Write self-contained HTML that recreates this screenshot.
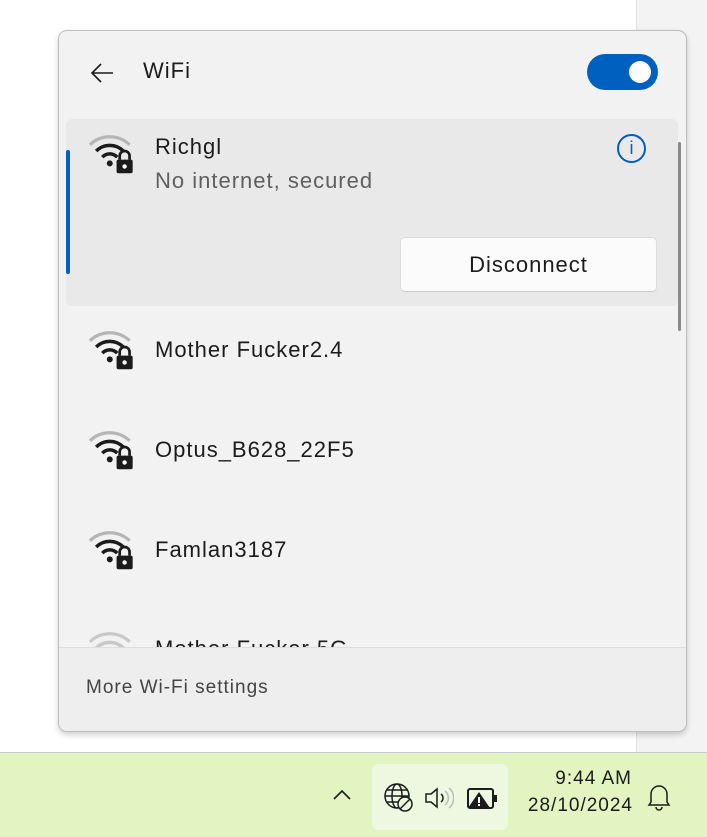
<!DOCTYPE html>
<html><head><style>
*{margin:0;padding:0;box-sizing:border-box}
body{width:707px;height:837px;overflow:hidden;background:#fff;font-family:"Segoe UI","Liberation Sans",sans-serif;position:relative}
.strip{position:absolute;left:636px;top:0;width:71px;height:752px;background:#f3f3f3;border-left:1px solid #e2e2e2}
.panel{position:absolute;left:58px;top:30px;width:629px;height:702px;background:#f2f2f2;border:1px solid #bdbdbd;border-radius:9px;overflow:hidden;box-shadow:0 3px 6px rgba(0,0,0,.18)}
.t{position:absolute;white-space:nowrap;color:#1b1b1b;letter-spacing:1px}
.big{font-size:22px}
.sel{position:absolute;left:7px;top:88px;width:612px;height:187px;background:#e9e9e9;border-radius:6px}
.bar{position:absolute;left:7px;top:119px;width:4px;height:124px;background:#0060c0;border-radius:2px}
.btn{position:absolute;left:341px;top:206px;width:257px;height:55px;background:#fbfbfb;border:1px solid #dcdcdc;border-bottom-color:#c8c8c8;border-radius:5px;font-size:22px;letter-spacing:1px;text-align:center;line-height:53px;color:#1b1b1b}
.foot{position:absolute;left:0;top:616px;width:100%;height:90px;background:#eeeeee;border-top:1px solid #dedede}
.task{position:absolute;left:0;top:752px;width:707px;height:85px;background:#e2f5c0;border-top:1px solid #c9c9c9}
.tray{position:absolute;left:372px;top:11px;width:136px;height:66px;background:#eef8e0;border-radius:6px}
</style></head><body>
<div class="strip"></div>
<svg width="0" height="0" style="position:absolute"><defs><g id="w">
<path d="M3 16A23 23 0 0 1 35 16" fill="none" stroke="#b5b5b5" stroke-width="2.6"/>
<path d="M8 21A15.5 15.5 0 0 1 30 21" fill="none" stroke="#1b1b1b" stroke-width="2.8"/>
<path d="M13 26A8 8 0 0 1 25 26" fill="none" stroke="#1b1b1b" stroke-width="2.8"/>
<circle cx="19" cy="31" r="2.4" fill="#1b1b1b"/>
<path d="M27 28v-3a4 4 0 0 1 8 0v3" fill="none" stroke="#1b1b1b" stroke-width="2.2"/>
<rect x="24.5" y="28" width="13" height="11" rx="1.5" fill="#1b1b1b"/><circle cx="31" cy="33.5" r="1.8" fill="#fff"/></g>
<g id="wg">
<path d="M3 16A23 23 0 0 1 35 16" fill="none" stroke="#c8c8c8" stroke-width="2.6"/>
<path d="M8 21A15.5 15.5 0 0 1 30 21" fill="none" stroke="#c8c8c8" stroke-width="2.8"/></g></defs></svg>
<div class="panel">
  <svg style="position:absolute;left:30px;top:30px" width="26" height="24" viewBox="0 0 26 24"><path d="M24 12H3M12 3L3 12l9 9" fill="none" stroke="#1b1b1b" stroke-width="1.6"/></svg>
  <div class="t big" style="left:84px;top:27px">WiFi</div>
  <div style="position:absolute;left:528px;top:23px;width:71px;height:36px;background:#0060c0;border-radius:18px"><div style="position:absolute;left:42px;top:7px;width:22px;height:22px;background:#fff;border-radius:50%"></div></div>
  <div class="sel"></div>
  <div class="bar"></div>
  <div style="position:absolute;left:558px;top:103px;width:29px;height:29px;border:2px solid #0060c0;border-radius:50%;color:#0060c0;text-align:center;font-size:18px;line-height:25px">i</div>
  <div style="position:absolute;left:619px;top:111px;width:3px;height:189px;background:#8a8a8a;border-radius:2px"></div>
  <div class="t big" style="left:96px;top:103px">Richgl</div>
  <div class="t big" style="left:96px;top:137px;color:#5f5f5f">No internet, secured</div>
  <div class="btn">Disconnect</div>
  <div class="t big" style="left:96px;top:306px">Mother Fucker2.4</div>
  <div class="t big" style="left:96px;top:406px">Optus_B628_22F5</div>
  <div class="t big" style="left:96px;top:506px">Famlan3187</div>
  <div class="t big" style="left:96px;top:605px">Mother Fucker 5G</div>
  <svg style="position:absolute;left:27px;top:591px" width="50" height="52" viewBox="0 0 40 42"><use href="#wg"/></svg>
  <div class="foot"><div class="t" style="left:27px;top:29px;font-size:19px;color:#444">More Wi-Fi settings</div></div>
</div>
<svg style="position:absolute;left:86px;top:125px" width="50" height="52" viewBox="0 0 40 42"><use href="#w"/></svg>
<svg style="position:absolute;left:86px;top:321px" width="50" height="52" viewBox="0 0 40 42"><use href="#w"/></svg>
<svg style="position:absolute;left:86px;top:421px" width="50" height="52" viewBox="0 0 40 42"><use href="#w"/></svg>
<svg style="position:absolute;left:86px;top:521px" width="50" height="52" viewBox="0 0 40 42"><use href="#w"/></svg>
<div class="task">
  <svg style="position:absolute;left:332px;top:36px" width="20" height="12"><path d="M2 10l8-8 8 8" fill="none" stroke="#1b1b1b" stroke-width="1.6"/></svg>
  <div class="tray">
    <svg style="position:absolute;left:11px;top:18px" width="32" height="32" viewBox="0 0 32 32" fill="none" stroke="#1b1b1b" stroke-width="1.5"><circle cx="14" cy="14" r="12"/><ellipse cx="14" cy="14" rx="5" ry="12"/><path d="M2 14h24M4 8h20M4 20h12"/><circle cx="22" cy="22" r="7" fill="#eef8e0"/><path d="M17 27l10-10"/></svg>
    <svg style="position:absolute;left:52px;top:22px" width="30" height="24" viewBox="0 0 30 24" fill="none" stroke-width="1.5"><path d="M2 8h5l6-5v18l-6-5H2z" stroke="#1b1b1b"/><path d="M17 8a5 5 0 0 1 0 8" stroke="#1b1b1b"/><path d="M21 5a9 9 0 0 1 0 14M25 2a13 13 0 0 1 0 20" stroke="#bbb"/></svg>
    <svg style="position:absolute;left:95px;top:24px" width="32" height="22" viewBox="0 0 32 22"><rect x="1" y="1" width="25" height="19" rx="2" fill="none" stroke="#1b1b1b" stroke-width="2"/><rect x="26" y="7" width="4" height="7" fill="#1b1b1b"/><path d="M1 20L12 4 23 20z" fill="#1b1b1b"/><rect x="11" y="9" width="2" height="6" fill="#fff"/><rect x="11" y="16" width="2" height="2" fill="#fff"/></svg>
  </div>
  <div class="t" style="right:75px;top:15px;font-size:19px;text-align:right">9:44 AM</div>
  <div class="t" style="right:74px;top:42px;font-size:19px;text-align:right">28/10/2024</div>
  <svg style="position:absolute;left:646px;top:29px" width="26" height="30" viewBox="0 0 26 30" fill="none" stroke="#1b1b1b" stroke-width="1.5"><path d="M5 20V12a8 8 0 0 1 16 0v8l2 3H3z"/><path d="M10 25a3 3 0 0 0 6 0"/></svg>
</div>
</body></html>
